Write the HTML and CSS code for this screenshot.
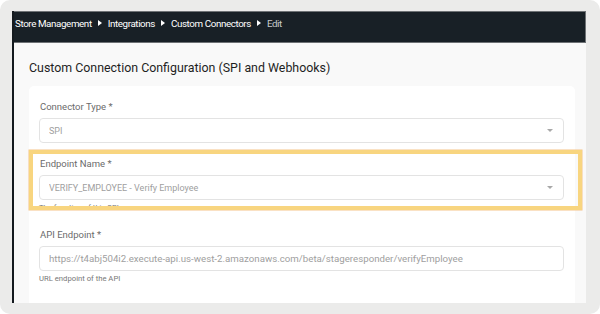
FILE: index.html
```html
<!DOCTYPE html>
<html>
<head>
<meta charset="utf-8">
<link rel="stylesheet" href="styles.css">
</head>
<body>
<div class="frame">
  <div class="window">
    <header class="topbar">
      <nav class="crumbs">
        <span class="crumb">Store Management</span>
        <span class="sep"></span>
        <span class="crumb">Integrations</span>
        <span class="sep"></span>
        <span class="crumb">Custom Connectors</span>
        <span class="sep"></span>
        <span class="crumb current">Edit</span>
      </nav>
    </header>
    <main class="content">
      <h1 class="title">Custom Connection Configuration (SPI and Webhooks)</h1>
      <section class="card">
        <div class="field">
          <label class="label">Connector Type *</label>
          <div class="select"><span class="value">SPI</span><span class="caret"></span></div>
        </div>
        <div class="field highlighted">
          <label class="label">Endpoint Name *</label>
          <div class="select"><span class="value">VERIFY_EMPLOYEE - Verify Employee</span><span class="caret"></span></div>
          <div class="help">The function of this SPI</div>
          <div class="spotlight"></div>
        </div>
        <div class="field">
          <label class="label">API Endpoint *</label>
          <div class="input"><span class="value url">https://t4abj504i2.execute-api.us-west-2.amazonaws.com/beta/stageresponder/verifyEmployee</span></div>
          <div class="help">URL endpoint of the API</div>
        </div>
      </section>
    </main>
  </div>
</div>
</body>
</html>
```

FILE: styles.css
```css
* { box-sizing: border-box; }
html, body { margin: 0; padding: 0; background: #ffffff; }
body { font-family: Roboto, "Liberation Sans", sans-serif; }

.frame {
  width: 600px;
  height: 314px;
  background: #ebebea;
  border-radius: 10px;
  padding: 11px 14px 11px 12px;
  overflow: hidden;
}

.window {
  height: 292px;
  display: flex;
  flex-direction: column;
  border-left: 2px solid #141a1f;
  overflow: hidden;
}

.topbar {
  height: 32px;
  flex: none;
  background: #182026;
  border: 1px solid #6e7275;
  border-left: none;
  padding: 3px 0 0 1px;
}

.crumbs {
  display: flex;
  align-items: center;
  height: 16px;
  font-size: 9.8px;
  color: #ffffff;
  letter-spacing: -0.4px;
}

.sep {
  width: 0;
  height: 0;
  border-top: 3.5px solid transparent;
  border-bottom: 3.5px solid transparent;
  border-left: 4px solid #ffffff;
  margin: 0 6px 0 6px;
}

.crumb.current { color: #c9cbcc; }

.content {
  flex: 1;
  background: #f9f9f9;
  padding: 17px 11px 0 15px;
  overflow: hidden;
}

.title {
  margin: 0 0 10px 0;
  font-size: 12.4px;
  line-height: 16px;
  font-weight: 400;
  color: #1f1f1f;
}

.card {
  background: #ffffff;
  border-radius: 5px;
  padding: 15px 11px 20px 10px;
  display: flex;
  flex-direction: column;
  gap: 15px;
  min-height: 240px;
}

.field {
  position: relative;
  display: flex;
  flex-direction: column;
}

.label {
  font-size: 9.5px;
  line-height: 12px;
  color: #6b6b6b;
  margin: 0 0 5px 1px;
}

.select, .input {
  height: 25px;
  border: 1px solid #e3e3e3;
  border-radius: 4px;
  display: flex;
  align-items: center;
  padding: 0 10px 0 9px;
}

.value {
  flex: 1;
  font-size: 9px;
  color: #a0a0a0;
  white-space: nowrap;
  overflow: hidden;
}

.value.url { font-size: 9.7px; }

.caret {
  width: 0;
  height: 0;
  border-left: 3.5px solid transparent;
  border-right: 3.5px solid transparent;
  border-top: 3.5px solid #a8a8a8;
}

.help {
  font-size: 7.7px;
  line-height: 11px;
  color: #777777;
  margin-top: 0;
  padding: 2px 0 1px 0;
}

.spotlight {
  position: absolute;
  left: -10px;
  top: -8px;
  width: 553px;
  height: 60px;
  border: 4px solid #f8d57f;
  box-shadow: 0 0 0 0.5px #f5c48a;
  pointer-events: none;
}
```
